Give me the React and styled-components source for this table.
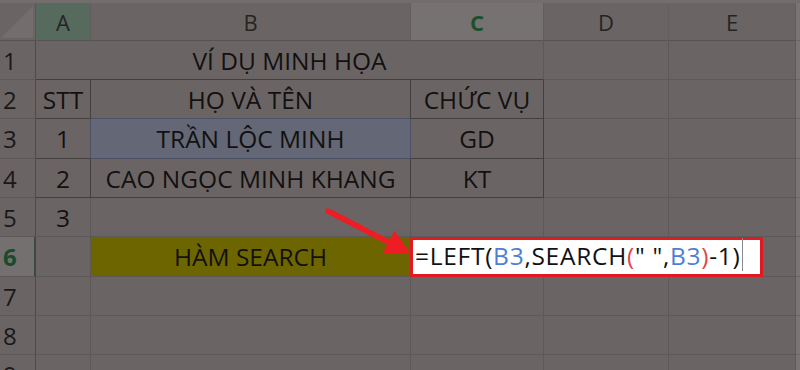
import React from 'react';
import styled, { createGlobalStyle } from 'styled-components';

const GRID = '#5d5958';
const DARK = '#433f3e';
const SEL = '#4c5064';

const Global = createGlobalStyle`
  html, body { margin: 0; padding: 0; background: #6a6564; }
  body { font-family: "Open Sans", "Noto Sans", sans-serif; }
`;

const Screen = styled.div`
  position: relative;
  width: 800px;
  height: 370px;
  overflow: hidden;
  background: #6a6564;
`;

const TopBand = styled.div`
  height: 3px;
  background: #736e6d;
`;

const Sheet = styled.div`
  display: grid;
  grid-template-columns: 36px 55px 320px 133px 125px 127px 4px;
  grid-template-rows: 38px 39px 39px 40px 39px 39px 40px 39px 39px 39px;
`;

const Corner = styled.div`
  position: relative;
  box-sizing: border-box;
  border-right: 1px solid #5a5655;
  border-bottom: 1px solid #575352;
  &::after {
    content: '';
    position: absolute;
    right: 2px;
    bottom: 2px;
    width: 0;
    height: 0;
    border-left: 32px solid transparent;
    border-bottom: 32px solid #736e6d;
  }
`;

const ColHeader = styled.div`
  box-sizing: border-box;
  display: flex;
  justify-content: center;
  align-items: flex-start;
  padding-top: 8px;
  background: ${(p) => p.$bg || '#6a6564'};
  border-right: 1px solid #625e5d;
  border-bottom: 1px solid #575352;
  color: ${(p) => p.$color || '#262423'};
  font-size: 22px;
  line-height: 22px;
  font-weight: ${(p) => (p.$bold ? 700 : 400)};
`;

const RowHeader = styled.div`
  box-sizing: border-box;
  display: flex;
  align-items: flex-start;
  padding: 8px 0 0 3px;
  background: ${(p) => (p.$active ? '#74706f' : '#6a6564')};
  border-right: ${(p) => (p.$active ? '2px solid #3b4940' : '1px solid #4f4b4a')};
  border-bottom: 1px solid ${GRID};
  color: ${(p) => (p.$active ? '#1d4a2c' : '#1a1817')};
  font-size: 24px;
  line-height: 24px;
  font-weight: ${(p) => (p.$active ? 700 : 400)};
`;

const Cell = styled.div`
  box-sizing: border-box;
  display: flex;
  justify-content: center;
  align-items: flex-start;
  padding-top: 8px;
  grid-column: span ${(p) => p.$span || 1};
  background: ${(p) => p.$bg || 'transparent'};
  border-right: 1px solid ${(p) => p.$r || GRID};
  border-bottom: 1px solid ${(p) => p.$b || GRID};
  color: #131110;
  font-size: 24.5px;
  line-height: 24.5px;
  white-space: nowrap;
`;

const EdgeStrip = styled.div`
  background: #7a7574;
  border-bottom: 1px solid #6a6564;
`;

const Editor = styled.div`
  position: absolute;
  left: 410px;
  top: 237px;
  width: 353px;
  height: 40px;
  box-sizing: border-box;
  display: flex;
  align-items: flex-start;
  padding: 4px 0 0 2px;
  background: #ffffff;
  border: 3px solid #e01a21;
  font-size: 24.5px;
  line-height: 24.5px;
  letter-spacing: 0.72px;
  color: #111111;
  white-space: nowrap;
`;

const Tok = styled.span`
  color: ${(p) => (p.$kind === 'ref' ? '#4d7fd4' : p.$kind === 'paren' ? '#e0464c' : '#111111')};
`;

const Caret = styled.span`
  display: inline-block;
  width: 1px;
  height: 33px;
  margin: -6px 0 0 1px;
  background: #8a8a8a;
`;

const Pointer = styled.svg`
  position: absolute;
  left: 320px;
  top: 200px;
  width: 100px;
  height: 60px;
  overflow: visible;
`;

const columns = [
  { label: 'A', bg: '#566a5e' },
  { label: 'B' },
  { label: 'C', bg: '#767271', color: '#1d4f2e', bold: true },
  { label: 'D' },
  { label: 'E' },
];

const rows = [
  {
    n: 1,
    cells: [{ span: 3, text: 'VÍ DỤ MINH HỌA', b: DARK }, {}, {}],
  },
  {
    n: 2,
    cells: [
      { text: 'STT', r: DARK, b: DARK },
      { text: 'HỌ VÀ TÊN', r: DARK, b: SEL },
      { text: 'CHỨC VỤ', r: DARK, b: DARK },
      {},
      {},
    ],
  },
  {
    n: 3,
    cells: [
      { text: '1', r: SEL, b: DARK },
      { text: 'TRẦN LỘC MINH', bg: '#646775', r: SEL, b: SEL },
      { text: 'GD', r: DARK, b: DARK },
      {},
      {},
    ],
  },
  {
    n: 4,
    cells: [
      { text: '2', r: DARK, b: DARK },
      { text: 'CAO NGỌC MINH KHANG', r: DARK, b: DARK },
      { text: 'KT', r: DARK, b: DARK },
      {},
      {},
    ],
  },
  { n: 5, cells: [{ text: '3' }, {}, {}, {}, {}] },
  { n: 6, active: true, cells: [{}, { text: 'HÀM SEARCH', bg: '#6d6600' }, {}, {}, {}] },
  { n: 7, cells: [{}, {}, {}, {}, {}] },
  { n: 8, cells: [{}, {}, {}, {}, {}] },
  { n: 9, cells: [{}, {}, {}, {}, {}] },
];

const formula = [
  ['=LEFT('],
  ['B3', 'ref'],
  [',SEARCH'],
  ['(', 'paren'],
  ['" ",'],
  ['B3', 'ref'],
  [')', 'paren'],
  ['-1)'],
];

export default function App() {
  return (
    <Screen>
      <Global />
      <TopBand />
      <Sheet>
        <Corner />
        {columns.map((c) => (
          <ColHeader key={c.label} $bg={c.bg} $color={c.color} $bold={c.bold}>
            {c.label}
          </ColHeader>
        ))}
        <EdgeStrip />
        {rows.map((row) => (
          <React.Fragment key={row.n}>
            <RowHeader $active={row.active}>{row.n}</RowHeader>
            {row.cells.map((c, i) => (
              <Cell key={i} $span={c.span} $bg={c.bg} $r={c.r} $b={c.b}>
                {c.text}
              </Cell>
            ))}
            <EdgeStrip />
          </React.Fragment>
        ))}
      </Sheet>

      <Pointer viewBox="0 0 100 60">
        <line x1="8" y1="11" x2="70" y2="43" stroke="#ee1d23" strokeWidth="5.5" strokeLinecap="round" />
        <polygon points="90,53 62.7,53.7 74.5,30.5" fill="#ee1d23" />
      </Pointer>

      <Editor>
        {formula.map(([t, kind], i) => (
          <Tok key={i} $kind={kind}>
            {t}
          </Tok>
        ))}
        <Caret />
      </Editor>
    </Screen>
  );
}
